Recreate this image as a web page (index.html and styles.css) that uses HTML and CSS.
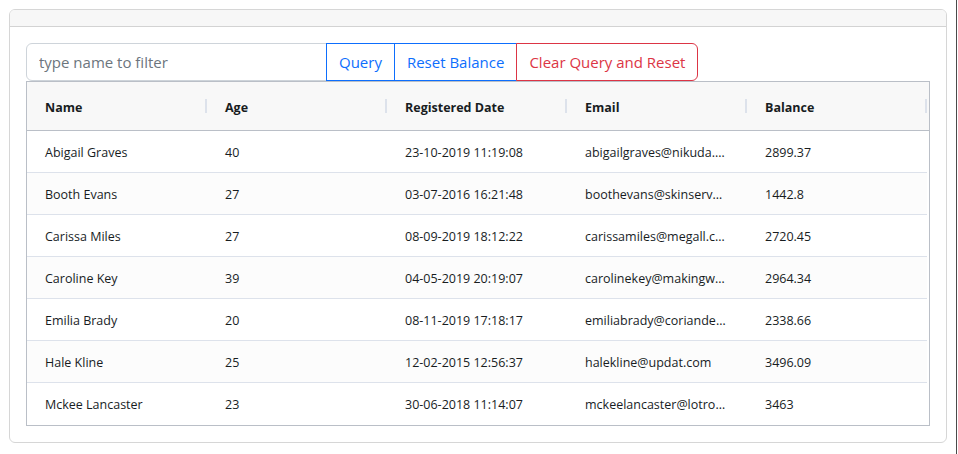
FILE: index.html
```html
<!DOCTYPE html>
<html>
<head>
<meta charset="utf-8">
<link rel="stylesheet" href="styles.css">
</head>
<body>
<div class="card">
  <div class="card-header"></div>
  <div class="card-body">
    <div class="input-group">
      <input class="form-control" type="text" placeholder="type name to filter">
      <button class="btn btn-primary">Query</button>
      <button class="btn btn-primary">Reset Balance</button>
      <button class="btn btn-danger last">Clear Query and Reset</button>
    </div>
    <div class="grid">
      <div class="row head">
        <div class="cell">Name<span class="sep"></span></div>
        <div class="cell">Age<span class="sep"></span></div>
        <div class="cell">Registered Date<span class="sep"></span></div>
        <div class="cell">Email<span class="sep"></span></div>
        <div class="cell">Balance<span class="sep"></span></div>
      </div>
      <div class="row"><div class="cell">Abigail Graves</div><div class="cell">40</div><div class="cell">23-10-2019 11:19:08</div><div class="cell">abigailgraves@nikuda.com</div><div class="cell">2899.37</div></div>
      <div class="row odd"><div class="cell">Booth Evans</div><div class="cell">27</div><div class="cell">03-07-2016 16:21:48</div><div class="cell">boothevans@skinserve.com</div><div class="cell">1442.8</div></div>
      <div class="row"><div class="cell">Carissa Miles</div><div class="cell">27</div><div class="cell">08-09-2019 18:12:22</div><div class="cell">carissamiles@megall.com</div><div class="cell">2720.45</div></div>
      <div class="row odd"><div class="cell">Caroline Key</div><div class="cell">39</div><div class="cell">04-05-2019 20:19:07</div><div class="cell">carolinekey@makingway.com</div><div class="cell">2964.34</div></div>
      <div class="row"><div class="cell">Emilia Brady</div><div class="cell">20</div><div class="cell">08-11-2019 17:18:17</div><div class="cell">emiliabrady@coriander.com</div><div class="cell">2338.66</div></div>
      <div class="row odd"><div class="cell">Hale Kline</div><div class="cell">25</div><div class="cell">12-02-2015 12:56:37</div><div class="cell">halekline@updat.com</div><div class="cell">3496.09</div></div>
      <div class="row last"><div class="cell">Mckee Lancaster</div><div class="cell">23</div><div class="cell">30-06-2018 11:14:07</div><div class="cell">mckeelancaster@lotron.com</div><div class="cell">3463</div></div>
    </div>
  </div>
</div>
</body>
</html>
```

FILE: styles.css
```css
html {
  background: linear-gradient(to left, #ffffff 0 1px, #4a4a4a 1px 2px, #ffffff 2px);
  min-height: 100%;
}
body {
  margin: 9px;
  font-family: "Open Sans", "Noto Sans", sans-serif;
  color: #212529;
}
.card {
  width: 938px;
  box-sizing: border-box;
  border: 1px solid #d6d6d6;
  border-radius: 6px;
  background: #fff;
}
.card-header {
  height: 16px;
  background: #f7f7f7;
  border-bottom: 1px solid #d3d3d3;
  border-radius: 5px 5px 0 0;
}
.card-body {
  padding: 16px 16px 16px 16px;
}
.input-group {
  display: flex;
  height: 38px;
}
.form-control {
  box-sizing: border-box;
  width: 301px;
  height: 38px;
  margin: 0;
  padding: 0 12px;
  border: 1px solid #ced4da;
  border-radius: 6px 0 0 6px;
  font-family: inherit;
  font-size: 15px;
  color: #212529;
  outline: none;
}
.form-control::placeholder {
  color: #6c757d;
}
.btn {
  box-sizing: border-box;
  height: 38px;
  margin: 0 0 0 -1px;
  padding: 0 12px;
  background: #fff;
  border: 1px solid;
  border-radius: 0;
  font-family: inherit;
  font-size: 15px;
  line-height: 1;
  cursor: pointer;
}
.btn-primary {
  color: #0d6efd;
  border-color: #0d6efd;
}
.btn-danger {
  color: #dc3545;
  border-color: #dc3545;
}
.btn.last {
  border-radius: 0 6px 6px 0;
}
.grid {
  box-sizing: border-box;
  width: 904px;
  border: 1px solid #babfc7;
  font-size: 12.5px;
  color: #181d1f;
}
.row {
  display: grid;
  grid-template-columns: repeat(5, 180px);
  height: 41px;
  border-bottom: 1px solid #dde2eb;
  margin-right: 2px;
  background: #fff;
}
.row.odd {
  background: #fcfcfc;
}
.row.last {
  border-bottom: none;
  height: 42px;
}
.row.head {
  height: 48px;
  margin-right: 0;
  background: #f8f8f8;
  border-bottom: 1px solid #babfc7;
  font-weight: 700;
}
.cell {
  position: relative;
  display: flex;
  align-items: center;
  padding: 0 18px;
  min-width: 0;
  overflow: hidden;
  white-space: nowrap;
}
.head .cell {
  padding-top: 2px;
}
.row:not(.head) .cell {
  display: block;
  line-height: 43px;
  text-overflow: ellipsis;
}
.sep {
  position: absolute;
  right: 0;
  top: 17px;
  width: 2px;
  height: 14px;
  background: #dde2eb;
}
```
